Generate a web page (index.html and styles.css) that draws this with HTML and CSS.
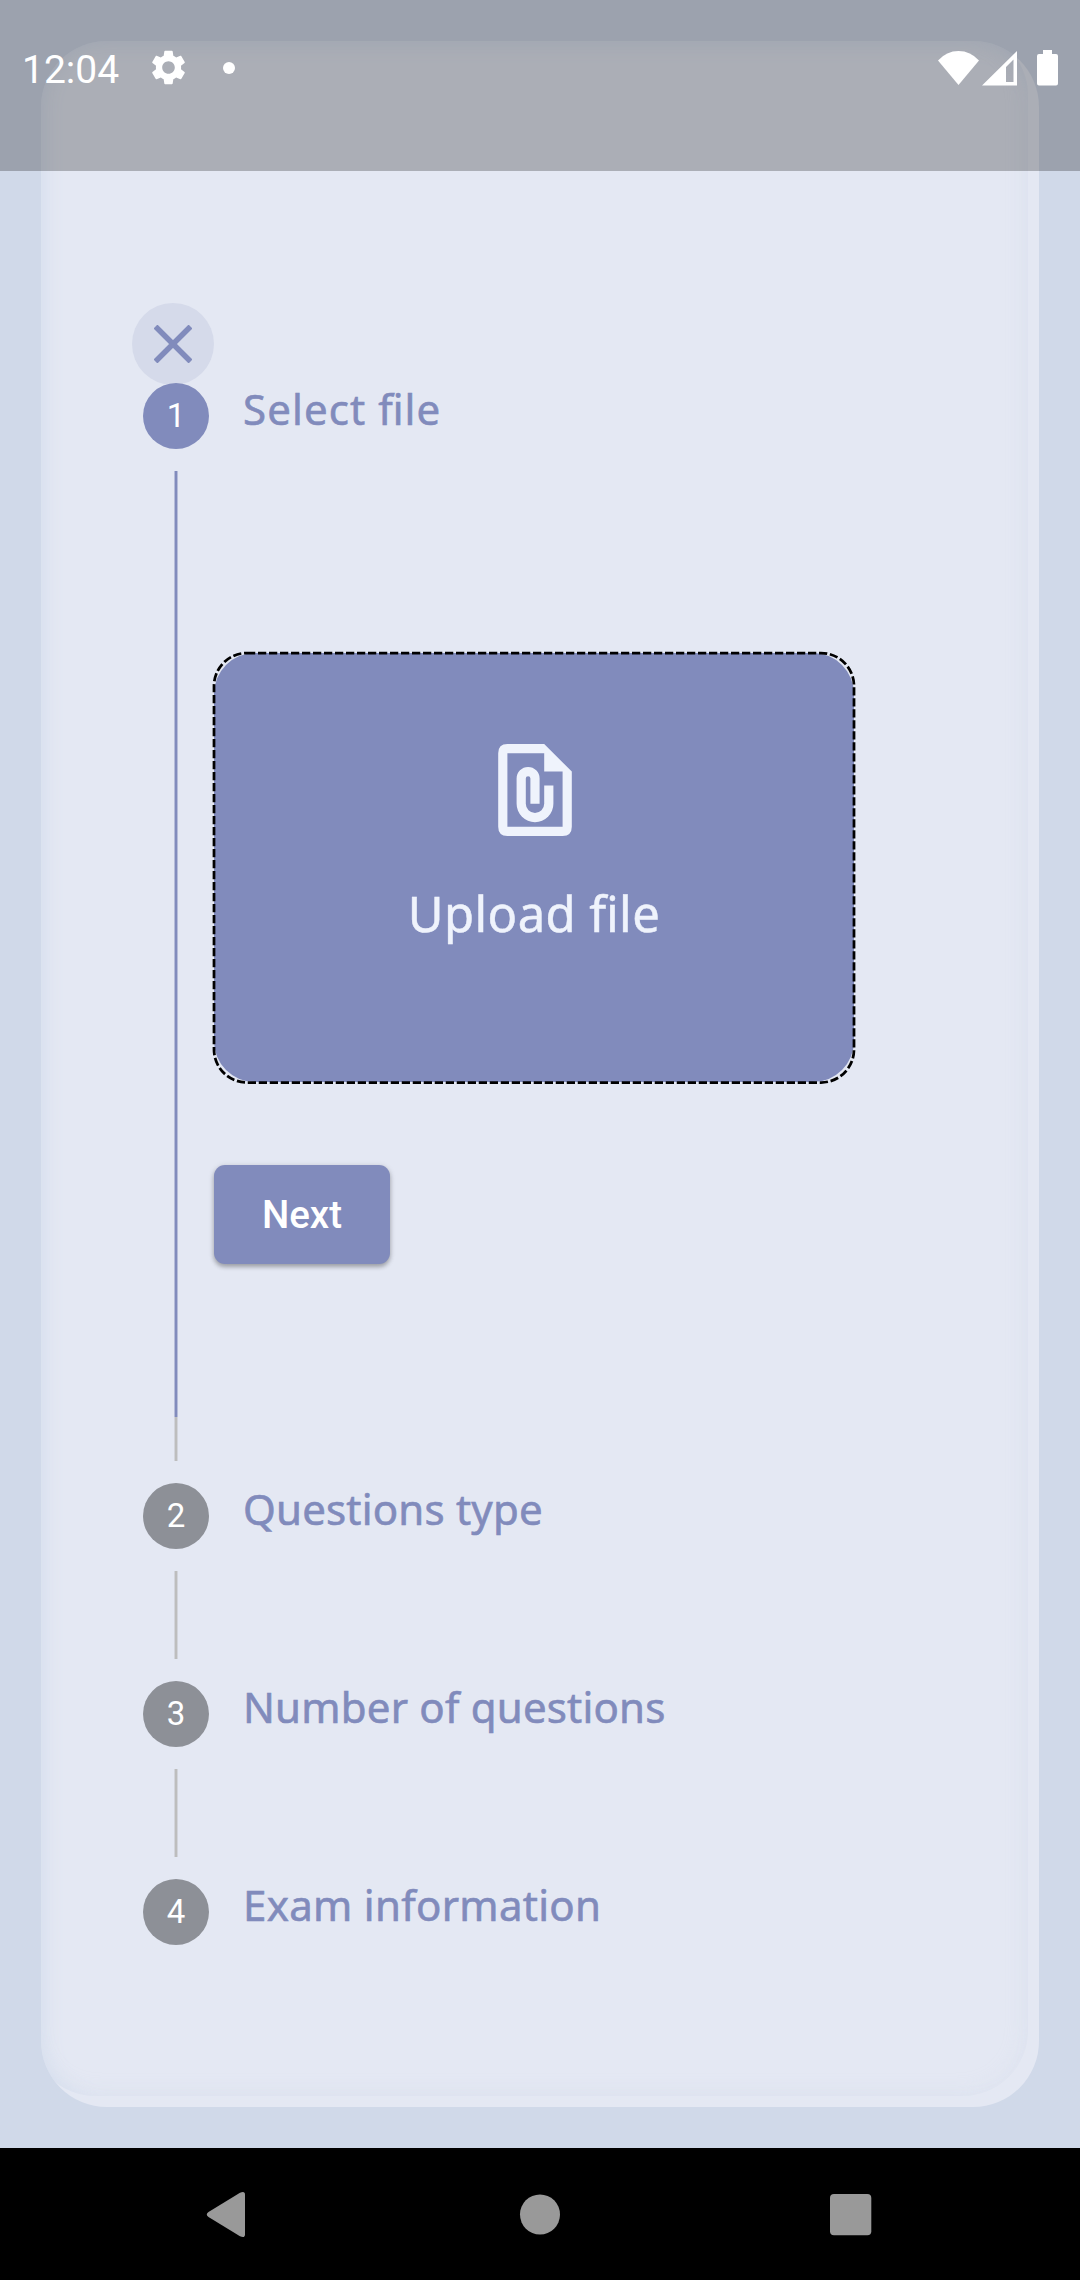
FILE: index.html
```html
<!DOCTYPE html>
<html lang="en">
<head>
<meta charset="utf-8">
<title>Create exam</title>
<link rel="stylesheet" href="styles.css">
</head>
<body>
<div class="screen">
  <header class="status">
    <span class="clock">12:04</span>
    <svg class="gear" viewBox="2 2 20 20"><path fill="#fff" d="M19.14 12.94c.04-.3.06-.61.06-.94s-.02-.64-.07-.94l2.03-1.58c.18-.14.23-.41.12-.61l-1.92-3.32c-.12-.22-.37-.29-.59-.22l-2.39.96c-.5-.38-1.03-.7-1.62-.94l-.36-2.54c-.04-.24-.24-.41-.48-.41h-3.84c-.24 0-.43.17-.47.41l-.36 2.54c-.59.24-1.13.57-1.62.94l-2.39-.96c-.22-.08-.47 0-.59.22L2.74 8.87c-.12.21-.08.47.12.61l2.03 1.58c-.05.3-.09.63-.09.94s.02.64.07.94l-2.03 1.58c-.18.14-.23.41-.12.61l1.92 3.32c.12.22.37.29.59.22l2.39-.96c.5.38 1.03.7 1.62.94l.36 2.54c.05.24.24.41.48.41h3.84c.24 0 .44-.17.47-.41l.36-2.54c.59-.24 1.13-.56 1.62-.94l2.39.96c.22.08.47 0 .59-.22l1.92-3.32c.12-.22.07-.47-.12-.61zM12 15.6c-1.98 0-3.6-1.62-3.6-3.6s1.62-3.6 3.6-3.6 3.6 1.62 3.6 3.6-1.62 3.6-3.6 3.6z"/></svg>
    <span class="dot"></span>
    <svg class="signals" viewBox="0 0 122 38" fill="#fff">
      <path d="M0 11.500Q8.500 2 20.500 2T41 11.500L20.500 36Z"/>
      <path fill-rule="evenodd" d="M79 2V36.500H44ZM75.500 10.500 68 18V33H75.500Z"/>
      <path d="M105 1h9v4h4q2 0 2 2v27.500q0 2-2 2h-17q-2 0-2-2V7q0-2 2-2h4Z"/>
    </svg>
  </header>

  <main class="card">
    <button class="close" aria-label="Close">
      <svg viewBox="0 0 38 38"><path d="M1.500 1.500 36.500 36.500M36.500 1.500 1.500 36.500" stroke="#818bbc" stroke-width="5.500"/></svg>
    </button>
    <ol class="steps">
      <li class="step step-active">
        <div class="rail"><span class="badge">1</span><span class="line"></span></div>
        <div class="body">
          <h2 class="title t1">Select file</h2>
          <div class="upload">
            <svg class="outline" viewBox="0 0 644 434"><rect x="2" y="2" width="640" height="429.500" rx="33" fill="none" stroke="#000" stroke-width="2.750" stroke-dasharray="8.250 2.750"/></svg>
            <svg class="file" viewBox="0 0 16 20" fill="#eff3fc"><path fill-rule="evenodd" d="M2 0H10L16 6V18Q16 20 14 20H2Q0 20 0 18V2Q0 0 2 0ZM2 2V18H14V6H10V2Z"/><path d="M10 9v4a2 2 0 0 1-4 0V7.500a.5.5 0 0 1 1 0V13h2V7.500a2.500 2.500 0 0 0-5 0V13a4 4 0 0 0 8 0V9Z"/></svg>
            <span class="upload-text">Upload file</span>
          </div>
          <button class="next">Next</button>
        </div>
      </li>
      <li class="step">
        <div class="rail"><span class="badge">2</span><span class="line"></span></div>
        <h2 class="title t2">Questions type</h2>
      </li>
      <li class="step">
        <div class="rail"><span class="badge">3</span><span class="line"></span></div>
        <h2 class="title t3">Number of questions</h2>
      </li>
      <li class="step">
        <div class="rail"><span class="badge">4</span></div>
        <h2 class="title t4">Exam information</h2>
      </li>
    </ol>
  </main>

  <nav class="nav">
    <svg viewBox="0 0 1080 132" fill="#999"><path d="M208.500 64 240 44.800q5-2.300 5 2v39.400q0 4.300-5 2L208.500 69q-3.500-2.500 0-5Z"/><circle cx="540" cy="66.500" r="20"/><rect x="830" y="46" width="41.300" height="41.300" rx="4"/></svg>
  </nav>
</div>
</body>
</html>
```
FILE: styles.css
```css
* { box-sizing: border-box; }
body { margin: 0; }
.screen {
  position: relative;
  display: flex;
  flex-direction: column;
  width: 1080px;
  height: 2280px;
  padding-top: 41px;
  background: #d0d9e9;
  font-family: Roboto, sans-serif;
  overflow: hidden;
}
.status {
  position: absolute;
  inset: 0 0 auto;
  z-index: 2;
  display: flex;
  align-items: center;
  height: 171px;
  padding: 0 20px 36px 22px;
  background: rgba(0, 0, 0, .25);
  color: #fff;
}
.clock { width: 129px; padding-top: 4px; font-size: 39px; line-height: 46px; }
.gear { width: 35px; height: 35px; }
.dot { width: 12px; height: 12px; margin-left: 37px; border-radius: 50%; background: #fff; }
.signals { width: 122px; height: 38px; margin-left: auto; }

.card {
  position: relative;
  height: 2066px;
  margin: 0 41px;
  padding: 262px 60px 0 91px;
  border-radius: 66px;
  background: #e4e8f3;
  overflow: hidden;
}
.card::before {
  content: "";
  position: absolute;
  top: -11px;
  left: -11px;
  width: 998px;
  height: 2066px;
  border-radius: 66px;
  box-shadow: inset 11px 11px 22px #d3dded, inset 0 0 22px rgba(208, 215, 230, .25);
}
.close {
  position: relative;
  display: grid;
  place-items: center;
  width: 82px;
  height: 82px;
  padding: 0;
  border: 0;
  border-radius: 50%;
  background: #d5daea;
}
.close svg { width: 38px; height: 38px; }

.steps { position: relative; margin: -2px 0 0; padding: 0 0 0 11px; list-style: none; }
.step { display: flex; height: 198px; }
.step-active { height: 1100px; }
.rail { display: flex; flex-direction: column; align-items: center; gap: 22px; width: 66px; padding-bottom: 22px; }
.badge {
  width: 66px;
  height: 66px;
  border-radius: 50%;
  background: #8d9097;
  color: #fff;
  font-size: 33px;
  line-height: 65px;
  text-align: center;
}
.line { flex: 1; width: 4px; background: linear-gradient(90deg, #d2d4db 1px, #bdbdbd 1px 3px, #d2d4db 3px); }
.step-active .badge { background: #818bbc; }
.step-active .line {
  background:
    linear-gradient(90deg, #b6bcd9 1px, #818bbc 1px 3px, #b6bcd9 3px) top / 100% 946px no-repeat,
    linear-gradient(90deg, #d2d4db 1px, #bdbdbd 1px 3px, #d2d4db 3px);
}
.title {
  height: 56px;
  margin: 0 0 0 34px;
  color: #818bbc;
  font: 400 42px/52px "Noto Sans", sans-serif;
  font-feature-settings: "liga" 1;
  letter-spacing: .2px;
  -webkit-text-stroke: .6px #818bbc;
  white-space: nowrap;
}
.body .title { margin-left: 29px; }
.t1 { letter-spacing: 1.1px; }
.t4 { letter-spacing: .3px; }
.body { display: flex; flex-direction: column; align-items: flex-start; padding-left: 5px; }
.upload {
  position: relative;
  display: flex;
  flex-direction: column;
  align-items: center;
  width: 640px;
  height: 429px;
  margin-top: 214px;
  padding-top: 91px;
  border-radius: 41px;
  background: #818bbc;
}
.outline { position: absolute; top: -2px; left: -2px; width: 644px; height: 434px; }
.file { width: 74px; height: 92px; margin-left: 1px; }
.upload-text {
  margin-top: 44px;
  color: #eff3fc;
  font: 49px/66px "Noto Sans", sans-serif;
  font-feature-settings: "liga" 1;
  letter-spacing: .4px;
  -webkit-text-stroke: .5px #eff3fc;
}
.next {
  width: 176px;
  height: 99px;
  margin-top: 83px;
  padding: 0;
  border: 0;
  border-radius: 11px;
  background: #818bbc;
  box-shadow: 0 3px 4px rgba(0, 0, 0, .25), 0 1px 6px rgba(0, 0, 0, .12);
  color: #fff;
  font: 500 38.500px/46px Roboto, sans-serif;
}
.nav { height: 132px; margin-top: 41px; background: #000; }
.nav svg { display: block; width: 1080px; height: 132px; }
```
